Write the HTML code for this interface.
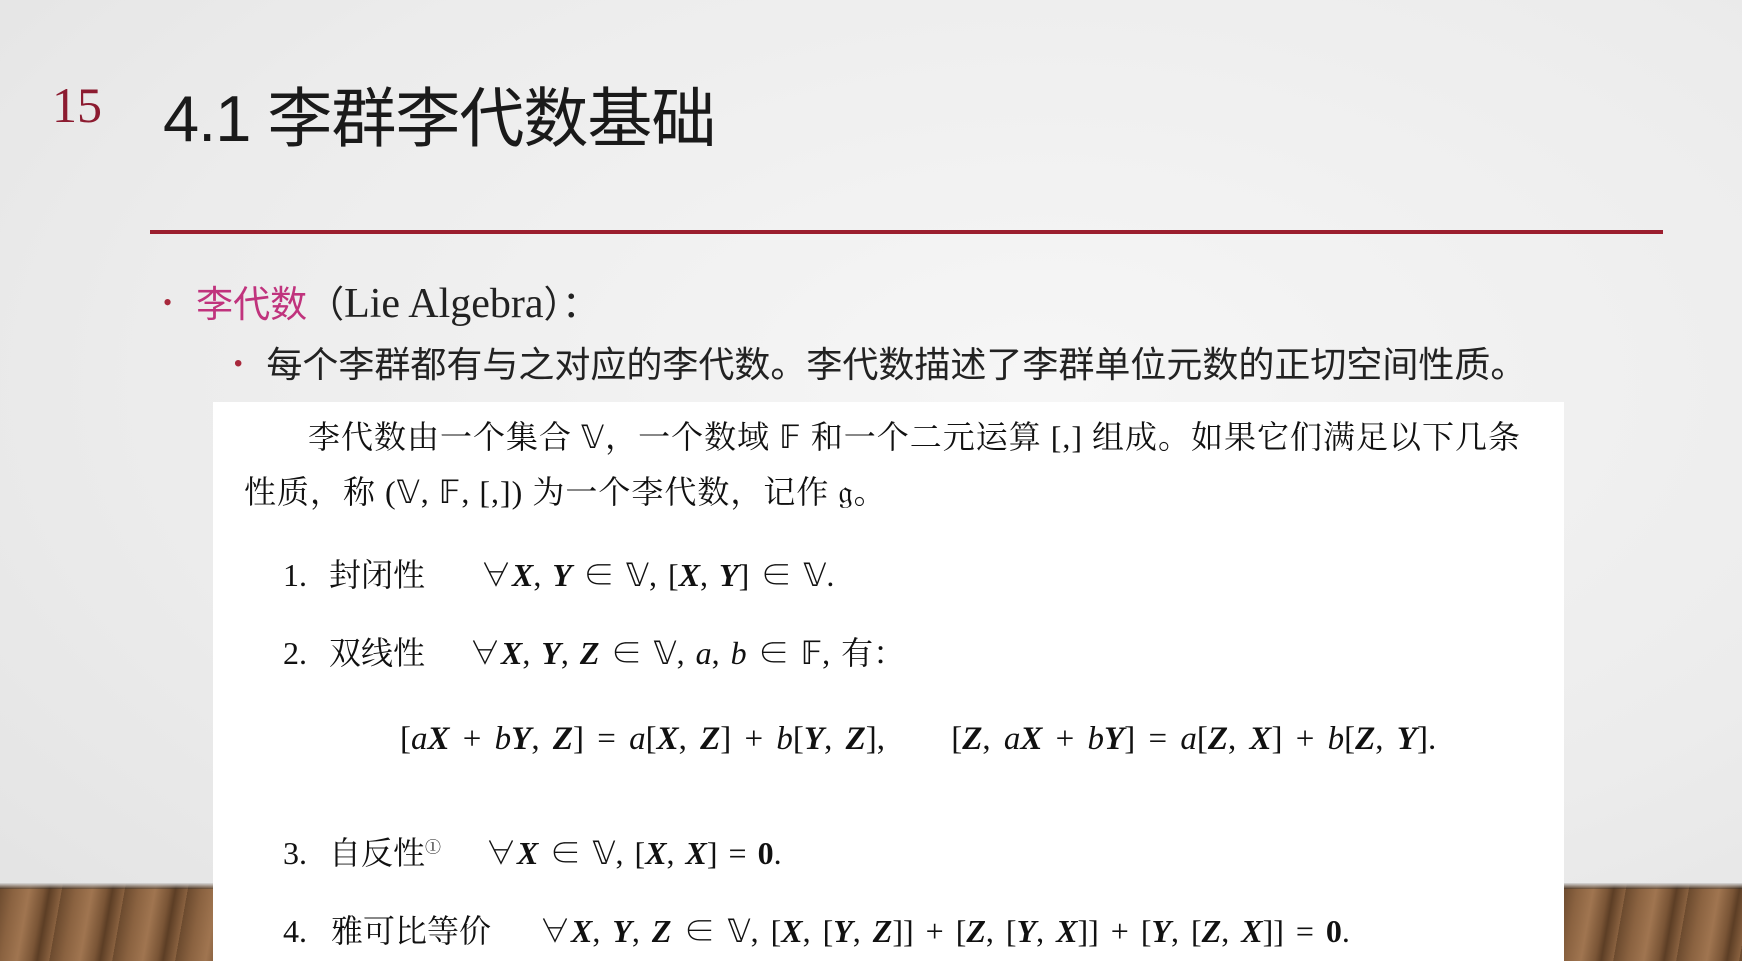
<!DOCTYPE html>
<html><head><meta charset="utf-8"><style>
html,body{margin:0;padding:0}
body{width:1742px;height:961px;position:relative;overflow:hidden;background:radial-gradient(ellipse at 60% 40%,#f6f6f6 0%,#ececec 60%,#e2e2e2 100%);font-family:"Liberation Serif","Noto Serif CJK SC",serif;}
.abs{position:absolute;white-space:nowrap}
.wood{position:absolute;top:883px;height:78px;background:repeating-linear-gradient(100deg,#6b4a2e 0px,#8a6240 14px,#a07550 30px,#7a5536 44px,#5c3e25 50px,#8a6240 62px);}
.wood:before{content:"";position:absolute;left:0;right:0;top:0;height:6px;background:linear-gradient(#d8d8d8,rgba(0,0,0,0.3));}
.box{position:absolute;left:213px;top:402px;width:1351px;height:559px;background:#fff;}
.t{font-size:32px;color:#111;}
.bx{font-weight:bold;font-style:italic}
.ds{font-family:"DejaVu Sans",serif;font-size:1em}
.it{word-spacing:3px}
</style></head><body>
<div class="wood" style="left:0;width:213px"></div>
<div class="wood" style="left:1564px;width:178px"></div>

<div class="abs" style="left:52px;top:76px;font-size:50px;color:#8c1b30;font-family:'Liberation Serif',serif">15</div>
<div class="abs" style="left:163px;top:66px;font-size:65px;color:#1a1a1a;font-family:'Liberation Sans','Noto Sans CJK SC',sans-serif;letter-spacing:-1px">4.1 李群李代数基础</div>
<div class="abs" style="left:150px;top:230px;width:1513px;height:4px;background:#9b1e2e"></div>

<div class="abs" style="left:163px;top:274px;font-size:37px;color:#222;font-family:'Liberation Serif','Noto Sans CJK SC',serif"><span style="color:#a8283c;font-size:26px;position:relative;top:-6px">•</span><span style="display:inline-block;width:24px"></span><span style="color:#c0337d">李代数</span>（<span style="font-size:42px">Lie Algebra</span>）：</div>
<div class="abs" style="left:234px;top:336px;font-size:36px;color:#222;font-family:'Liberation Sans','Noto Sans CJK SC',sans-serif"><span style="color:#a8283c;font-size:24px;position:relative;top:-6px">•</span><span style="display:inline-block;width:24px"></span>每个李群都有与之对应的李代数。李代数描述了李群单位元数的正切空间性质。</div>

<div class="box"></div>
<div class="abs t" style="left:308px;top:412px;letter-spacing:1px">李代数由一个集合 <span class="ds">𝕍</span>，一个数域 <span class="ds">𝔽</span> 和一个二元运算 [,] 组成。如果它们满足以下几条</div>
<div class="abs t" style="left:244px;top:467px;letter-spacing:1px">性质，称 (<span class="ds">𝕍</span>, <span class="ds">𝔽</span>, [,]) 为一个李代数，记作 <span class="ds">𝔤</span>。</div>

<div class="abs t it" style="left:283px;top:550px">1.&nbsp; 封闭性 &nbsp;&nbsp;&nbsp; ∀<span class="bx">X</span>, <span class="bx">Y</span> ∈ <span class="ds">𝕍</span>, [<span class="bx">X</span>, <span class="bx">Y</span>] ∈ <span class="ds">𝕍</span>.</div>
<div class="abs t it" style="left:283px;top:628px">2.&nbsp; 双线性 &nbsp;&nbsp; ∀<span class="bx">X</span>, <span class="bx">Y</span>, <span class="bx">Z</span> ∈ <span class="ds">𝕍</span>, <i>a</i>, <i>b</i> ∈ <span class="ds">𝔽</span>, 有：</div>
<div class="abs t" style="left:400px;top:721px;word-spacing:5px;font-size:33px">[<i>a</i><span class="bx">X</span> + <i>b</i><span class="bx">Y</span>, <span class="bx">Z</span>] = <i>a</i>[<span class="bx">X</span>, <span class="bx">Z</span>] + <i>b</i>[<span class="bx">Y</span>, <span class="bx">Z</span>], &nbsp;&nbsp;&nbsp; [<span class="bx">Z</span>, <i>a</i><span class="bx">X</span> + <i>b</i><span class="bx">Y</span>] = <i>a</i>[<span class="bx">Z</span>, <span class="bx">X</span>] + <i>b</i>[<span class="bx">Z</span>, <span class="bx">Y</span>].</div>
<div class="abs t it" style="left:283px;top:828px">3.&nbsp; 自反性<sup style="font-size:16px">①</sup> &nbsp;&nbsp; ∀<span class="bx">X</span> ∈ <span class="ds">𝕍</span>, [<span class="bx">X</span>, <span class="bx">X</span>] = <b>0</b>.</div>
<div class="abs t" style="left:283px;top:906px;word-spacing:4px">4.&nbsp; 雅可比等价 &nbsp;&nbsp; ∀<span class="bx">X</span>, <span class="bx">Y</span>, <span class="bx">Z</span> ∈ <span class="ds">𝕍</span>, [<span class="bx">X</span>, [<span class="bx">Y</span>, <span class="bx">Z</span>]] + [<span class="bx">Z</span>, [<span class="bx">Y</span>, <span class="bx">X</span>]] + [<span class="bx">Y</span>, [<span class="bx">Z</span>, <span class="bx">X</span>]] = <b>0</b>.</div>
</body></html>
